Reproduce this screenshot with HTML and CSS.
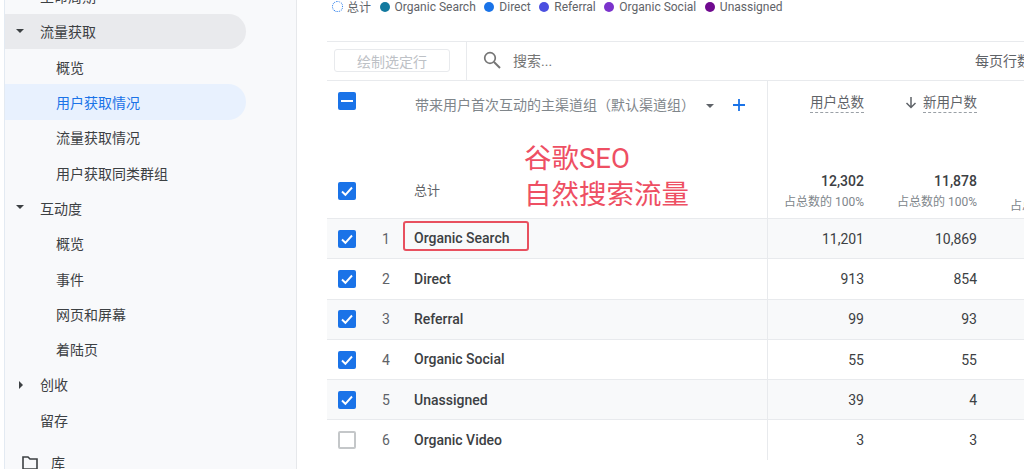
FILE: index.html
```html
<!DOCTYPE html>
<html lang="zh-CN">
<head>
    <meta charset="UTF-8">
    <meta name="viewport" content="width=device-width, initial-scale=1.0">
    <title>用户获取情况</title>
    <link rel="stylesheet" href="styles.css">
</head>
<body>
    <aside class="sidebar">
        <ul class="nav">
            <li class="nav-item level-1">生命周期</li>
            <li class="nav-item level-1 open"><span class="caret down"></span>流量获取</li>
            <li class="nav-item level-2">概览</li>
            <li class="nav-item level-2 selected">用户获取情况</li>
            <li class="nav-item level-2">流量获取情况</li>
            <li class="nav-item level-2">用户获取同类群组</li>
            <li class="nav-item level-1"><span class="caret down"></span>互动度</li>
            <li class="nav-item level-2">概览</li>
            <li class="nav-item level-2">事件</li>
            <li class="nav-item level-2">网页和屏幕</li>
            <li class="nav-item level-2">着陆页</li>
            <li class="nav-item level-1"><span class="caret right"></span>创收</li>
            <li class="nav-item level-1">留存</li>
            <li class="nav-item library">
                <svg class="folder" width="16" height="14" viewBox="0 0 16 14"><path d="M1 13V1h5l2 2h7v10z" fill="none" stroke="#3c4043" stroke-width="1.6"/></svg>
                库
            </li>
        </ul>
    </aside>

    <main class="main">
        <div class="legend">
            <span class="legend-item total"><i class="ring"></i>总计</span>
            <span class="legend-item"><i class="dot" style="background:#12799f"></i>Organic Search</span>
            <span class="legend-item"><i class="dot" style="background:#1a73e8"></i>Direct</span>
            <span class="legend-item"><i class="dot" style="background:#4b4fe0"></i>Referral</span>
            <span class="legend-item"><i class="dot" style="background:#7b33cc"></i>Organic Social</span>
            <span class="legend-item"><i class="dot" style="background:#6f0a8f"></i>Unassigned</span>
        </div>

        <div class="toolbar">
            <div class="toolbar-left"><button class="plot-btn">绘制选定行</button></div>
            <div class="search">
                <svg width="18" height="18" viewBox="0 0 18 18"><circle cx="7" cy="7" r="5.3" fill="none" stroke="#757575" stroke-width="1.7"/><path d="M11 11l6 6" stroke="#757575" stroke-width="1.9"/></svg>
                <span>搜索...</span>
            </div>
            <div class="per-page">每页行数</div>
        </div>

        <div class="table">
            <div class="head-top">
                <div class="first-cell">
                    <span class="box minus"><i></i></span>
                    <span class="dimension">带来用户首次互动的主渠道组（默认渠道组）</span>
                    <span class="caret down small"></span>
                    <svg class="plus" width="12" height="12" viewBox="0 0 12 12"><path d="M6 0v12M0 6h12" stroke="#1a73e8" stroke-width="1.8"/></svg>
                </div>
                <div class="metric"><span class="metric-name">用户总数</span></div>
                <div class="metric">
                    <svg class="sort-arrow" width="12" height="13" viewBox="0 0 12 13"><path d="M6 1v10M1.5 7l4.500 4.500L10.500 7" fill="none" stroke="#5f6368" stroke-width="1.500"/></svg>
                    <span class="metric-name">新用户数</span>
                </div>
                <div class="metric"></div>
            </div>

            <div class="head-total">
                <div class="first-cell">
                    <span class="box checked"><svg width="18" height="18" viewBox="0 0 18 18"><path d="M4 9.500l3.400 3.300L14 5.500" fill="none" stroke="#fff" stroke-width="1.900"/></svg></span>
                    <span class="total-label">总计</span>
                </div>
                <div class="sum"><b>12,302</b><small>占总数的 100%</small></div>
                <div class="sum"><b>11,878</b><small>占总数的 100%</small></div>
                <div class="sum"><small>占总数的 100%</small></div>
            </div>

            <div class="row shaded">
                <div class="first-cell">
                    <span class="box checked"><svg width="18" height="18" viewBox="0 0 18 18"><path d="M4 9.500l3.400 3.300L14 5.500" fill="none" stroke="#fff" stroke-width="1.900"/></svg></span>
                    <span class="num">1</span><span class="name">Organic Search</span>
                </div>
                <div class="val">11,201</div><div class="val">10,869</div><div class="val"></div>
            </div>
            <div class="row">
                <div class="first-cell">
                    <span class="box checked"><svg width="18" height="18" viewBox="0 0 18 18"><path d="M4 9.500l3.400 3.300L14 5.500" fill="none" stroke="#fff" stroke-width="1.900"/></svg></span>
                    <span class="num">2</span><span class="name">Direct</span>
                </div>
                <div class="val">913</div><div class="val">854</div><div class="val"></div>
            </div>
            <div class="row shaded">
                <div class="first-cell">
                    <span class="box checked"><svg width="18" height="18" viewBox="0 0 18 18"><path d="M4 9.500l3.400 3.300L14 5.500" fill="none" stroke="#fff" stroke-width="1.900"/></svg></span>
                    <span class="num">3</span><span class="name">Referral</span>
                </div>
                <div class="val">99</div><div class="val">93</div><div class="val"></div>
            </div>
            <div class="row">
                <div class="first-cell">
                    <span class="box checked"><svg width="18" height="18" viewBox="0 0 18 18"><path d="M4 9.500l3.400 3.300L14 5.500" fill="none" stroke="#fff" stroke-width="1.900"/></svg></span>
                    <span class="num">4</span><span class="name">Organic Social</span>
                </div>
                <div class="val">55</div><div class="val">55</div><div class="val"></div>
            </div>
            <div class="row shaded">
                <div class="first-cell">
                    <span class="box checked"><svg width="18" height="18" viewBox="0 0 18 18"><path d="M4 9.500l3.400 3.300L14 5.500" fill="none" stroke="#fff" stroke-width="1.900"/></svg></span>
                    <span class="num">5</span><span class="name">Unassigned</span>
                </div>
                <div class="val">39</div><div class="val">4</div><div class="val"></div>
            </div>
            <div class="row">
                <div class="first-cell">
                    <span class="box"></span>
                    <span class="num">6</span><span class="name">Organic Video</span>
                </div>
                <div class="val">3</div><div class="val">3</div><div class="val"></div>
            </div>
        </div>

        <!-- red notes drawn on top of the screenshot -->
        <div class="note">谷歌SEO<br>自然搜索流量</div>
        <div class="note-box"></div>
    </main>
</body>
</html>
```

FILE: styles.css
```css
* {
    box-sizing: border-box;
}
html, body {
    margin: 0;
    height: 469px;
    overflow: hidden;
}
body {
    display: flex;
    background: #fff;
    color: #3c4043;
    font-family: Roboto, "Noto Sans CJK SC", sans-serif;
    font-size: 14px;
}

/* sidebar */
.sidebar {
    flex: 0 0 293px;
    margin-left: 4px;
    background: #f8f9fb;
    border-left: 1px solid #e3eaf2;
    border-right: 1px solid #e6e8eb;
    overflow: hidden;
}
.nav {
    list-style: none;
    margin: -21.5px 0 0;
    padding: 0;
    width: 241px;
}
.nav-item {
    position: relative;
    display: flex;
    align-items: center;
    height: 35.3px;
    font-size: 14px;
    border-radius: 0 18px 18px 0;
}
.level-1 {
    padding-left: 35px;
}
.level-2 {
    padding-left: 51px;
}
.open {
    background: #e9eaed;
}
.selected {
    background: #e8f1fe;
    color: #1a73e8;
}
.library {
    margin-top: 7px;
    padding-left: 46px;
}
.folder {
    position: absolute;
    left: 17px;
    top: 12px;
}
.caret {
    position: absolute;
    width: 0;
    height: 0;
}
.caret.down {
    left: 11px;
    top: 15px;
    border-left: 4px solid transparent;
    border-right: 4px solid transparent;
    border-top: 4px solid #3c4043;
}
.caret.right {
    left: 14px;
    top: 14px;
    border-top: 4px solid transparent;
    border-bottom: 4px solid transparent;
    border-left: 4px solid #3c4043;
}

/* main */
.main {
    position: relative;
    flex: 1;
    min-width: 0;
    padding-left: 30px;
    overflow: hidden;
}
.legend {
    display: flex;
    align-items: center;
    height: 13px;
    margin-left: 5px;
    font-size: 12px;
    color: #5f6368;
}
.legend-item {
    display: flex;
    align-items: center;
    gap: 5px;
    margin-right: 8.6px;
    white-space: nowrap;
}
.legend-item.total {
    gap: 4px;
}
.dot {
    width: 10px;
    height: 10px;
    border-radius: 50%;
}
.ring {
    width: 11px;
    height: 11px;
    border-radius: 50%;
    border: 1.5px dotted #1a73e8;
}

.toolbar {
    display: flex;
    align-items: center;
    height: 40px;
    margin-top: 28px;
    border-top: 1px solid #e8eaed;
    border-bottom: 1px solid #e8eaed;
}
.toolbar-left {
    display: flex;
    align-items: center;
    width: 140px;
    height: 100%;
    padding: 0 0 1px 7px;
    border-right: 1px solid #e8eaed;
}
.plot-btn {
    width: 116px;
    height: 23px;
    padding: 0;
    background: #fff;
    border: 1px solid #e8eaed;
    border-radius: 3px;
    color: #bdc1c6;
    font-family: inherit;
    font-size: 14px;
}
.search {
    display: flex;
    align-items: center;
    gap: 12px;
    flex: 1;
    padding: 0 0 2px 16px;
    color: #757575;
}
.per-page {
    width: 49px;
    padding-bottom: 2px;
    white-space: nowrap;
    overflow: hidden;
    color: #5f6368;
}

/* table */
.head-top, .head-total, .row {
    display: grid;
    grid-template-columns: 441px 96px 113px 113px;
}
.head-top {
    height: 87px;
}
.head-top .first-cell {
    padding-top: 11px;
    align-items: flex-start;
}
.head-total {
    height: 51px;
    border-bottom: 1px solid #e8eaed;
}
.head-total .first-cell {
    padding-bottom: 5px;
}
.row {
    height: 40.3px;
    border-bottom: 1px solid #e8eaed;
}
.row:last-child {
    height: 40px;
    border-bottom: 0;
}
.shaded {
    background: #f8f9fa;
}
.first-cell {
    position: relative;
    display: flex;
    align-items: center;
    padding-left: 11px;
    border-right: 1px solid #e8eaed;
}
.box {
    flex: none;
    display: block;
    width: 18px;
    height: 18px;
    margin-right: 18px;
    background: #fff;
    border: 2px solid #c4c7c9;
    border-radius: 2px;
}
.box.checked, .box.minus {
    background: #1a73e8;
    border: 0;
}
.box svg {
    display: block;
}
.box.minus i {
    display: block;
    width: 12px;
    height: 2px;
    margin: 8px 3px;
    background: #fff;
}
.num {
    width: 24px;
    text-align: center;
    color: #5f6368;
    font-size: 14px;
}
.name {
    padding-left: 16px;
    font-weight: 500;
    color: #3c4043;
    margin-top: -0.5px;
}
.dimension {
    margin: 2px 0 0 41px;
    color: #80868b;
    white-space: nowrap;
}
.head-top .caret.down {
    left: 379px;
    top: 23px;
    border-top-color: #5f6368;
}
.plus {
    position: absolute;
    left: 406px;
    top: 18px;
}
.total-label {
    margin: -2px 0 0 40px;
    color: #5f6368;
    font-size: 13px;
}
.metric {
    display: flex;
    justify-content: flex-end;
    align-items: flex-start;
    padding-top: 12px;
    font-size: 13.5px;
}
.metric-name {
    padding-bottom: 1px;
    border-bottom: 1px dashed #9aa0a6;
    color: #5f6368;
    line-height: 18px;
}
.sort-arrow {
    margin: 3px 6px 0 0;
}
.sum {
    display: flex;
    flex-direction: column;
    align-items: flex-end;
    justify-content: flex-start;
    white-space: nowrap;
    padding-top: 4px;
}
.sum b {
    font-weight: 500;
    font-size: 14px;
    line-height: 18px;
}
.sum small {
    margin-top: 4px;
    font-size: 12px;
    color: #80868b;
    line-height: 17px;
}
.sum:last-child small {
    margin-top: 26px;
}
.val {
    display: flex;
    align-items: center;
    justify-content: flex-end;
    font-size: 14px;
    color: #3c4043;
}

/* annotations */
.note {
    position: absolute;
    left: 227px;
    top: 141px;
    color: #ee4f63;
    font-size: 27.500px;
    line-height: 36px;
    white-space: nowrap;
}
.note-box {
    position: absolute;
    left: 106px;
    top: 221px;
    width: 126px;
    height: 30px;
    border: 2px solid #e8505f;
    border-radius: 3px;
}
```
